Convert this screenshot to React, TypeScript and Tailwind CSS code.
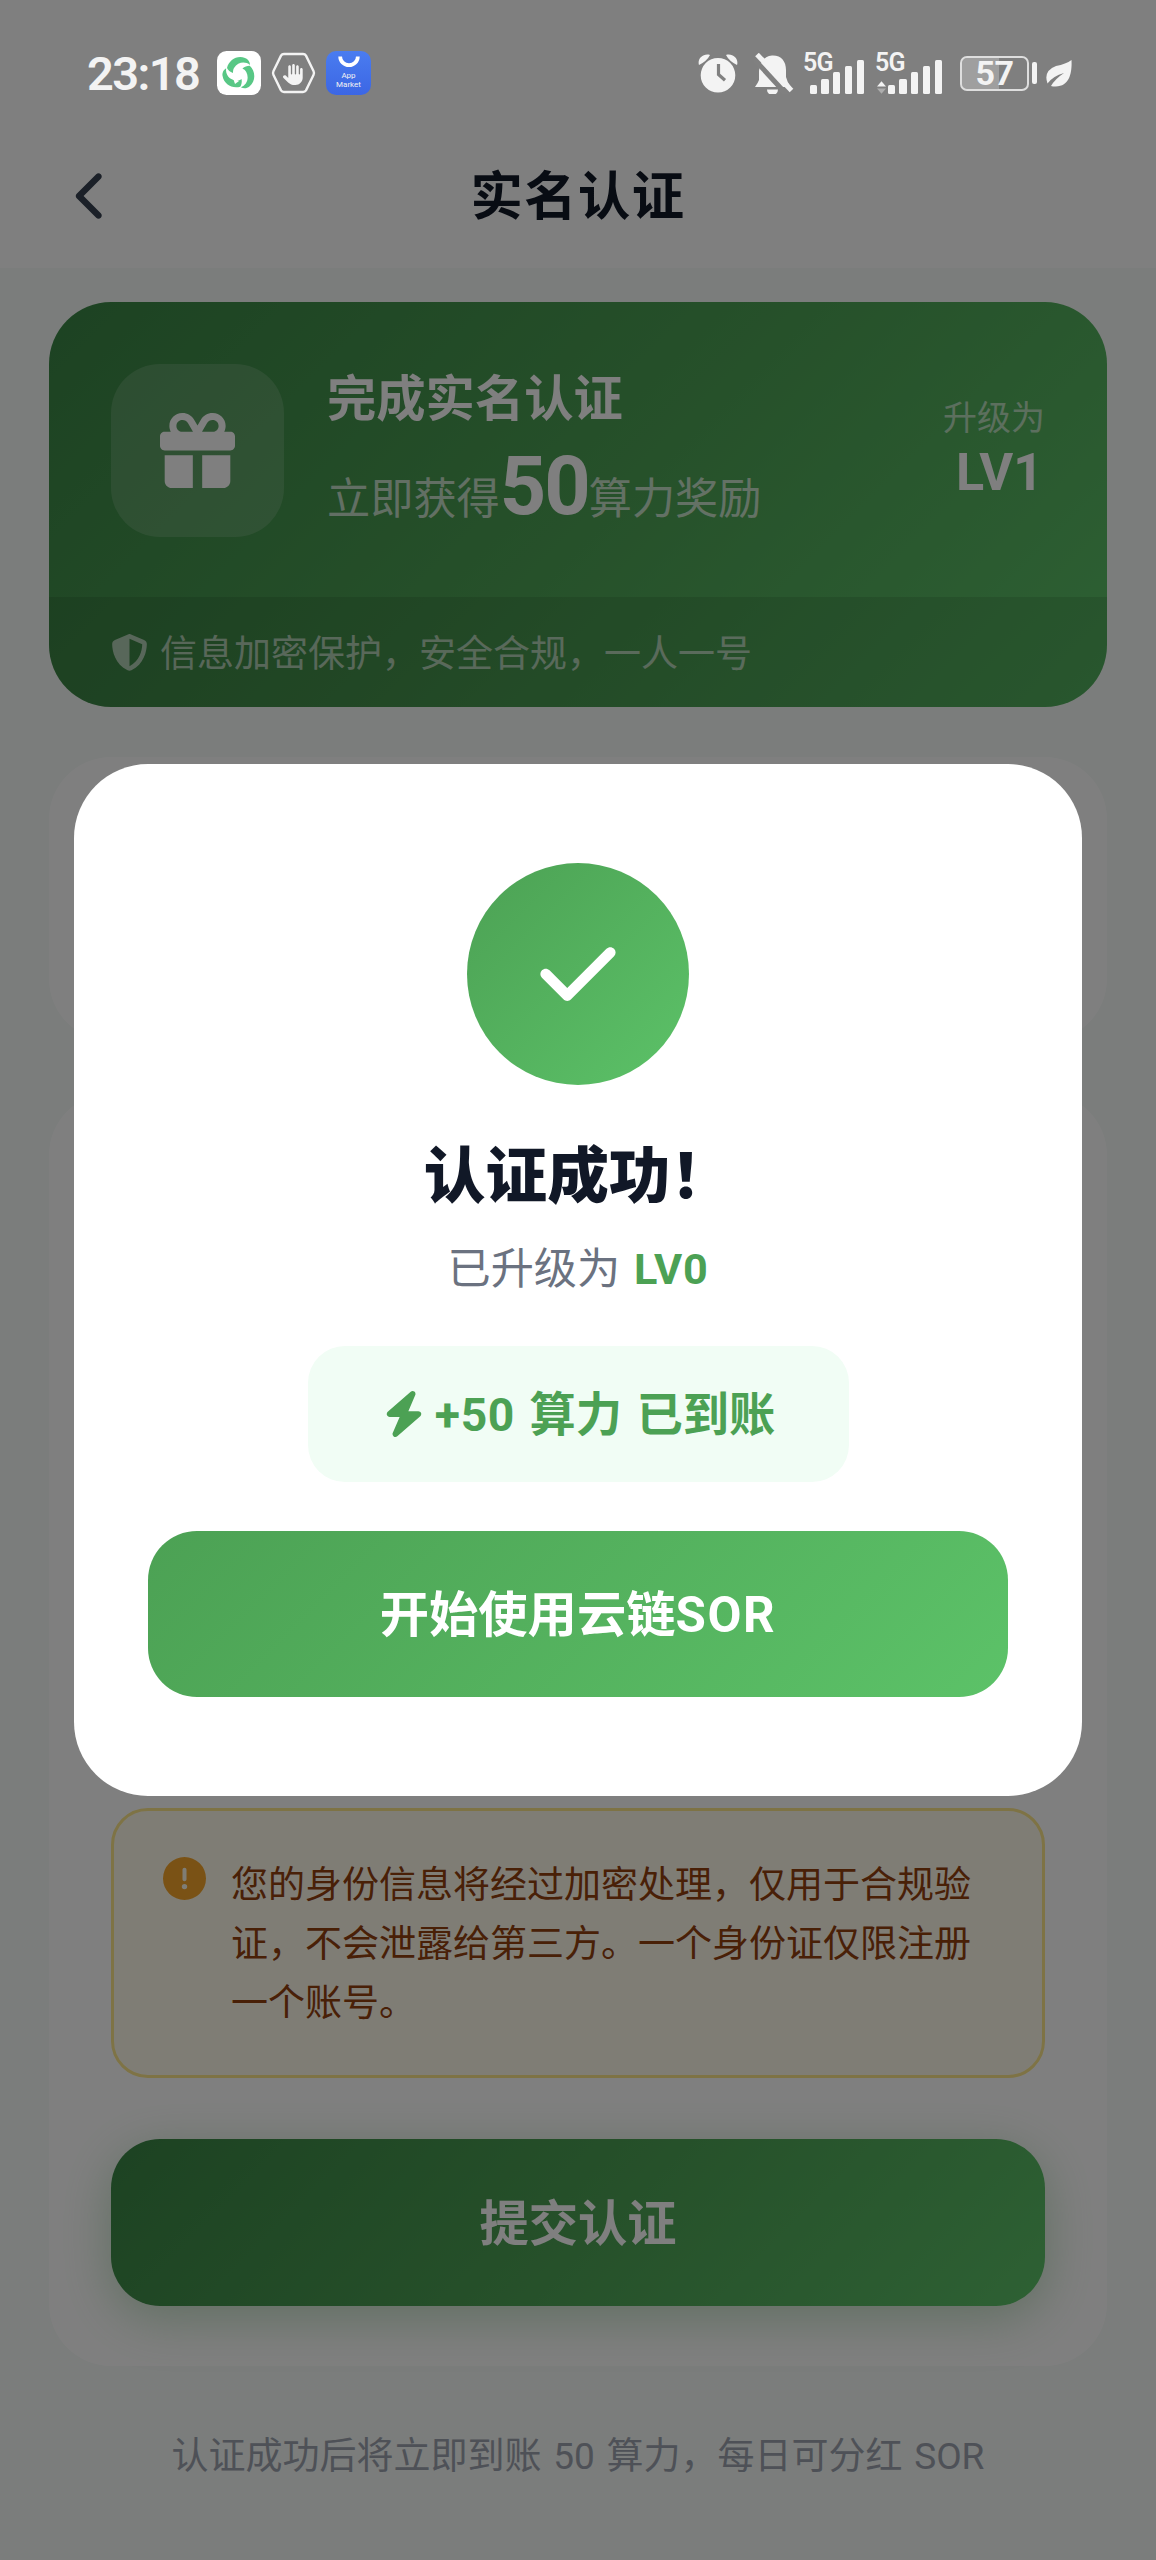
import {
  FaBolt,
  FaCheck,
  FaChevronLeft,
  FaCircleExclamation,
  FaGift,
  FaHand,
  FaShieldHalved,
} from "react-icons/fa6";

const bars = [9, 15, 22, 28, 34];

function Signal({ data = false }: { data?: boolean }) {
  return (
    <div
      className={`relative flex h-[41px] items-end justify-end gap-[4.5px] ${data ? "w-[66px]" : "w-[60px]"}`}
    >
      <span className="absolute left-[-1px] top-0 text-[25px] font-semibold leading-[20px] tracking-[-0.8px]">
        5G
      </span>
      {data && (
        <svg viewBox="0 0 10 14" className="mr-[-2.5px] h-[13px] w-[9px]" aria-hidden>
          <path d="M0 6 5 0l5 6z" fill="currentColor" />
          <path d="M0 8h10l-5 6z" fill="currentColor" opacity="0.4" />
        </svg>
      )}
      {bars.map((h) => (
        <span
          key={h}
          className="w-[7.3px] rounded-[1.5px] bg-current"
          style={{ height: h }}
        />
      ))}
    </div>
  );
}

function StatusBar() {
  return (
    <div className="relative z-20 flex h-[146px] items-center pl-[87px] pr-[84px] text-[#f3f3f3]">
      <span className="w-[130px] text-[47px] font-semibold leading-none tracking-[-1.6px]">
        23:18
      </span>

      {/* Notification icons */}
      <svg viewBox="0 0 44 44" className="size-[44px]" aria-hidden>
        <rect width="44" height="44" rx="9.5" fill="#fff" />
        <g fill="#58c785">
          <path d="M10 17C12 9 20 4 28 7c3 1 5 4 5 7-5-4-12-3-16 3-1 2-1 3-1 5-3-1-5-3-6-5z" />
          <path
            d="M10 17C12 9 20 4 28 7c3 1 5 4 5 7-5-4-12-3-16 3-1 2-1 3-1 5-3-1-5-3-6-5z"
            transform="rotate(120 22 22.5)"
          />
          <path
            d="M10 17C12 9 20 4 28 7c3 1 5 4 5 7-5-4-12-3-16 3-1 2-1 3-1 5-3-1-5-3-6-5z"
            transform="rotate(240 22 22.5)"
          />
          <path d="m16 27 2 6 4-3z" fill="#fff" />
        </g>
      </svg>
      <div className="relative ml-[10px] flex h-[42px] w-[45px] items-center justify-center">
        <svg viewBox="0 0 45 42" className="absolute inset-0" fill="none" aria-hidden>
          <path
            d="M13 2h19q2 0 3 1.6L42.500 19q1 2 0 4L35 38.400q-1 1.600-3 1.600H13q-2 0-3-1.600L2.500 23q-1-2 0-4L10 3.600Q11 2 13 2z"
            stroke="currentColor"
            strokeWidth="2.4"
          />
        </svg>
        <FaHand className="mt-[2px] h-[27px] w-[21px]" aria-hidden />
      </div>
      <div className="ml-[10px] flex h-[44px] w-[45px] flex-col items-center rounded-[10px] bg-gradient-to-b from-[#4a7cf0] to-[#3c66e4]">
        <svg viewBox="0 0 24 14" className="mt-[4px] h-[13px] w-[24px]" fill="none" aria-hidden>
          <path d="M2.5 1.500a9.500 9.500 0 0 0 19 0" stroke="#fff" strokeWidth="4" />
        </svg>
        <span className="mt-[3px] text-center text-[8px] leading-[9px]">
          App
          <br />
          Market
        </span>
      </div>

      {/* System icons */}
      <svg viewBox="0 0 40 39" className="ml-auto h-[39px] w-[40px]" aria-hidden>
        <path
          d="M20 4a17.300 17.300 0 1 0 0 34.600A17.300 17.300 0 0 0 20 4z"
          fill="currentColor"
        />
        <path d="M1 11C-1 5 5-1 12 1q-3 6-11 10zM39 11C41 5 35-1 28 1q3 6 11 10z" fill="currentColor" />
        <path d="M20.500 10v10.500l6.500 5.800" stroke="#808080" strokeWidth="3.2" fill="none" />
      </svg>
      <svg viewBox="0 0 40 41" className="ml-[16px] h-[41px] w-[40px]" aria-hidden>
        <path
          d="M1 34q3-4 4-7V18C6 8 11 3 18 2.500 27 2 32 8 32 17v7q1 5 5 10z"
          fill="currentColor"
        />
        <path d="M13 36.500h11a5.500 5.500 0 0 1-11 0z" fill="currentColor" />
        <path d="M0 6 33 42" stroke="#808080" strokeWidth="5" />
        <path d="m3 1.500 34.500 36" stroke="currentColor" strokeWidth="5" />
      </svg>
      <div className="ml-[10px] flex gap-[12px]">
        <Signal />
        <Signal data />
      </div>
      <div className="relative ml-[18px] flex h-[35px] w-[69px] items-center justify-center rounded-[7px] border-2 border-[#dedede]">
        <span className="absolute inset-y-0 left-0 w-[37px] rounded-l-[5px] bg-white/25" />
        <span className="relative text-[34px] font-bold leading-[31px] tracking-[-0.5px]">57</span>
      </div>
      <span className="ml-[3px] h-[22px] w-[5px] rounded-[2px] bg-current" />
      <svg viewBox="0 0 26 27" className="ml-[9px] h-[27px] w-[26px]" aria-hidden>
        <path
          d="M25.500 0C26 10 25 27 9 26.500q-2 0-4-.5Q9 19 18 13 7 16 1.500 23.500-3 11 10 6 20 4 25.500 0z"
          fill="currentColor"
        />
      </svg>
    </div>
  );
}

function RewardCard() {
  return (
    <section className="h-[405px] overflow-hidden rounded-[62px] bg-[linear-gradient(135deg,#3a8545,#4ca154_50%,#5cc268)] text-white">
      <div className="flex h-[295px] items-start px-[62px] pt-[62px]">
        <div className="flex size-[173px] items-center justify-center rounded-[49px] bg-white/15">
          <FaGift className="size-[75px]" aria-hidden />
        </div>
        <div className="ml-[43px] flex-1">
          <h2 className="mt-[7px] text-[49.3px] font-bold leading-[56px]">完成实名认证</h2>
          <p className="mt-[15px] flex items-baseline text-[43.2px] leading-[90px] text-white/70">
            立即获得
            <span className="text-[81px] font-bold leading-[90px] tracking-[-2px] text-white">50</span>
            算力奖励
          </p>
        </div>
        <div className="mt-[32px] text-right">
          <p className="text-[34px] leading-[44px] text-white/60">升级为</p>
          <p className="pr-[2px] pt-[3px] text-[52px] font-bold leading-[60px]">LV1</p>
        </div>
      </div>
      <div className="flex h-[110px] items-center bg-black/10 px-[62px] text-[37px] text-white/60">
        <FaShieldHalved className="size-[37px]" aria-hidden />
        <span className="ml-[12px] pt-[5px]">信息加密保护，安全合规，一人一号</span>
      </div>
    </section>
  );
}

function SuccessDialog() {
  return (
    <div className="absolute inset-0 z-10 flex items-center justify-center bg-black/50">
      <div
        role="dialog"
        className="flex h-[1032px] w-[1008px] flex-col items-center rounded-[74px] bg-white px-[74px] pt-[99px]"
      >
        <div className="flex size-[222px] items-center justify-center rounded-full bg-[linear-gradient(135deg,#4ca154,#5cc268)] text-white">
          <FaCheck className="size-[86px]" aria-hidden />
        </div>
        <h2 className="mt-[55px] text-[61.7px] font-black leading-[74px] text-[#111827]">
          认证成功！
        </h2>
        <p className="mt-[26px] text-[43.2px] leading-[60px] text-[#6b7280] [word-spacing:3px]">
          已升级为 <span className="font-bold tracking-[0.8px] text-[#4ca154]">LV0</span>
        </p>
        <div className="mt-[46px] flex h-[136px] w-[541px] items-center justify-center rounded-[37px] bg-[#f1fdf5] text-[46.25px] font-bold text-[#4ca154]">
          <FaBolt className="size-[46px]" aria-hidden />
          <span className="ml-[8px] pt-[4px] [word-spacing:3px]">
            <span className="tracking-[0.6px]">+50</span> 算力 已到账
          </span>
        </div>
        <button className="mt-[49px] h-[166px] w-full rounded-[49px] bg-[linear-gradient(135deg,#4ca154,#5cc268)] pt-[4px] text-[49.3px] font-bold text-white">
          开始使用云链<span className="tracking-[1.6px]">SOR</span>
        </button>
      </div>
    </div>
  );
}

export default function App() {
  return (
    <div className="relative flex h-[2560px] w-[1156px] flex-col overflow-hidden bg-[#f6faf8] font-[Roboto,'Noto_Sans_CJK_SC',sans-serif]">
      <div className="bg-white">
        <StatusBar />
        <header className="flex h-[122px] items-start justify-between px-[66px]">
          <FaChevronLeft className="mt-[24px] size-[52px] text-[#374151]" aria-hidden />
          <h1 className="pt-[21px] text-[52.4px] font-bold leading-[60px] tracking-[1.4px] text-[#111827]">
            实名认证
          </h1>
          <div className="w-[52px]" />
        </header>
      </div>

      <main className="flex flex-col px-[49px] pt-[34px]">
        <RewardCard />

        <section className="mt-[50px] h-[284px] rounded-[62px] bg-white" />

        <section className="mt-[52px] flex h-[1273px] flex-col justify-end rounded-[62px] bg-white px-[62px] pb-[60px]">
          <div className="flex h-[270px] rounded-[37px] border-[3px] border-[#fde68a] bg-[#fffbeb] px-[49px] pt-[46px]">
            <FaCircleExclamation className="size-[43px] shrink-0 text-[#f5a52a]" aria-hidden />
            <p className="ml-[25px] mt-[-1px] text-[37px] leading-[59px] text-[#92400e]">
              您的身份信息将经过加密处理，仅用于合规验证，不会泄露给第三方。一个身份证仅限注册一个账号。
            </p>
          </div>
          <button className="mt-[61px] h-[167px] rounded-[49px] bg-[linear-gradient(135deg,#3a8545,#4ca154_50%,#5cc268)] pt-[4px] text-[49.3px] font-bold text-white shadow-[0_12px_49px_rgba(76,161,84,0.35)]">
            提交认证
          </button>
        </section>

        <p className="mt-[61px] text-center text-[37px] leading-[60px] text-[#9ca3af] [word-spacing:2.5px]">
          认证成功后将立即到账 50 算力，每日可分红 SOR
        </p>
      </main>

      <SuccessDialog />
    </div>
  );
}
